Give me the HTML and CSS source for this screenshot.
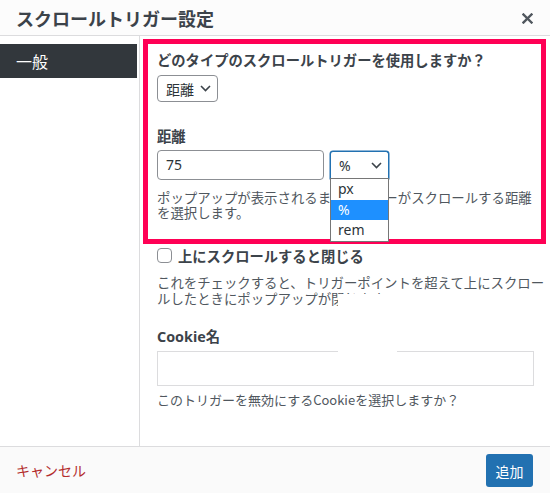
FILE: index.html
```html
<!DOCTYPE html>
<html lang="ja">
<head>
<meta charset="utf-8">
<link rel="stylesheet" href="styles.css">
</head>
<body>
<div class="modal">
  <header class="modal-header">
    <h1 class="title">スクロールトリガー設定</h1>
    <button class="close" aria-label="閉じる">
      <svg width="11" height="11" viewBox="0 0 11 11"><path d="M1.5 1.5 L9.5 9.5 M9.5 1.5 L1.5 9.5" stroke="#50575e" stroke-width="2.4" stroke-linecap="square"/></svg>
    </button>
  </header>
  <div class="modal-body">
    <nav class="sidebar">
      <div class="tab active">一般</div>
    </nav>
    <section class="content">
      <div class="field">
        <div class="label">どのタイプのスクロールトリガーを使用しますか？</div>
        <div class="select type-select">
          <span>距離</span>
          <svg class="chev" width="11" height="7" viewBox="0 0 11 7"><path d="M1 1 L5.5 5.5 L10 1" fill="none" stroke="#3c434a" stroke-width="1.6"/></svg>
        </div>
      </div>
      <div class="field distance">
        <div class="label">距離</div>
        <div class="distance-row">
          <div class="input num">75</div>
          <div class="unit-wrap">
            <div class="select unit-select">
              <span>%</span>
              <svg class="chev" width="11" height="7" viewBox="0 0 11 7"><path d="M1 1 L5.5 5.5 L10 1" fill="none" stroke="#3c434a" stroke-width="1.6"/></svg>
            </div>
            <ul class="dropdown">
              <li>px</li>
              <li class="selected">%</li>
              <li>rem</li>
            </ul>
          </div>
        </div>
        <p class="help help-distance">ポップアップが表示されるまでユーザーがスクロールする距離<br>を選択します。</p>
      </div>
      <div class="field check-field">
        <label class="check-row"><span class="checkbox"></span><span class="check-label">上にスクロールすると閉じる</span></label>
        <p class="help help-check">これをチェックすると、トリガーポイントを超えて上にスクロー<br>ルしたときにポップアップが閉じます</p>
      </div>
      <div class="field cookie">
        <div class="label">Cookie名</div>
        <div class="input wide"></div>
        <p class="help help-cookie">このトリガーを無効にするCookieを選択しますか？</p>
      </div>
    </section>
  </div>
  <footer class="modal-footer">
    <a class="cancel">キャンセル</a>
    <button class="add">追加</button>
  </footer>
  <div class="highlight"></div>
  <div class="mask"></div>
</div>
</body>
</html>
```
FILE: styles.css
```css
* { box-sizing: border-box; }
html, body { margin: 0; padding: 0; }
body {
  width: 550px;
  height: 493px;
  overflow: hidden;
  background: #fff;
  font-family: "Noto Sans", "Noto Sans CJK JP", sans-serif;
  color: #3c434a;
}
.modal {
  position: relative;
  width: 550px;
  height: 493px;
  display: flex;
  flex-direction: column;
}
.modal-header {
  height: 36px;
  flex: none;
  background: #fcfcfc;
  border-bottom: 1px solid #dcdcde;
  display: flex;
  align-items: center;
  justify-content: space-between;
  padding: 0 17px 0 16px;
}
.title {
  margin: 0;
  font-size: 18px;
  font-weight: 700;
  color: #3c434a;
  line-height: 24px;
  font-family: "Noto Sans CJK JP", sans-serif;
}
.close {
  border: 0;
  background: none;
  padding: 0;
  display: flex;
  margin-top: 1px;
}
.modal-body {
  flex: none;
  height: 410px;
  display: flex;
}
.sidebar {
  width: 140px;
  flex: none;
  border-right: 1px solid #dcdcde;
  padding: 8px 0 0;
}
.tab {
  height: 34px;
  background: #32373c;
  color: #fff;
  font-size: 16px;
  font-family: "Noto Sans CJK JP", sans-serif;
  line-height: 34px;
  padding-left: 16px;
  margin-right: 2px;
}
.content {
  flex: 1;
  padding: 14px 0 0 17px;
}
.label {
  font-size: 14.3px;
  line-height: 20px;
  font-weight: 700;
  color: #3c434a;
  font-family: "Noto Sans CJK JP", sans-serif;
}
.select {
  display: flex;
  align-items: center;
  justify-content: space-between;
  border: 1px solid #8c8f94;
  border-radius: 4px;
  background: #fff;
  font-size: 14px;
  color: #2c3338;
}
.type-select {
  margin-top: 5px;
  width: 61px;
  height: 27px;
  padding: 0 6px 0 8px;
  font-family: "Noto Sans CJK JP", sans-serif;
}
.distance { margin-top: 24px; }
.distance-row {
  margin-top: 4px;
  display: flex;
  align-items: flex-start;
  gap: 6px;
}
.input {
  border: 1px solid #8c8f94;
  border-radius: 4px;
  background: #fff;
  font-size: 14px;
}
.num {
  width: 167px;
  height: 30px;
  line-height: 28px;
  padding-left: 8px;
  color: #2c3338;
}
.unit-wrap {
  position: relative;
  margin-top: 1px;
}
.unit-select {
  width: 59px;
  height: 28px;
  border: 1px solid #2271b1;
  box-shadow: 0 0 0 0.5px #2271b1;
  border-bottom-color: #767676;
  border-radius: 3px 3px 0 0;
  padding: 0 6px 0 8px;
}
.dropdown {
  position: absolute;
  left: 0;
  top: 27px;
  width: 59px;
  margin: 0;
  padding: 0;
  list-style: none;
  background: #fff;
  border: 1px solid #767676;
  z-index: 2;
  font-size: 14px;
  color: #2c3338;
}
.dropdown li {
  height: 20.5px;
  line-height: 20px;
  padding-left: 7px;
}
.dropdown li.selected {
  background: #1e90ff;
  color: #fff;
}
.help {
  margin: 0;
  font-size: 13.4px;
  color: #50575e;
  font-family: "Noto Sans CJK JP", sans-serif;
  white-space: nowrap;
}
.help-distance {
  margin-top: 10px;
  line-height: 15px;
}
.check-field { margin-top: 25px; }
.check-row {
  display: flex;
  align-items: center;
  height: 20px;
}
.checkbox {
  width: 15px;
  height: 15px;
  border: 1px solid #8c8f94;
  border-radius: 4px;
  background: #fff;
  margin-right: 6px;
}
.check-label {
  font-size: 14.3px;
  font-weight: 700;
  color: #3c434a;
  font-family: "Noto Sans CJK JP", sans-serif;
}
.help-check {
  margin-top: 9px;
  line-height: 16px;
}
.cookie { margin-top: 21px; }
.cookie .label { font-family: "Noto Sans", "Noto Sans CJK JP", sans-serif; }
.wide {
  margin-top: 4px;
  width: 377px;
  height: 35px;
  border: 1px solid #dcdcde;
  border-radius: 0;
}
.help-cookie {
  margin-top: 6px;
  line-height: 16px;
  font-size: 13px;
}
.modal-footer {
  flex: 1;
  background: #fafafa;
  border-top: 1px solid #dcdcde;
  display: flex;
  align-items: center;
  justify-content: space-between;
  padding: 0 17px 0 16px;
}
.cancel {
  color: #b32d2e;
  font-size: 14px;
  font-family: "Noto Sans CJK JP", sans-serif;
}
.add {
  width: 47px;
  height: 33px;
  border: 0;
  border-radius: 3px;
  background: #2271b1;
  color: #fff;
  font-size: 14px;
  font-family: "Noto Sans CJK JP", sans-serif;
  padding: 0;
  margin-top: 1px;
}
.highlight {
  position: absolute;
  left: 143px;
  top: 39px;
  width: 403px;
  height: 205px;
  border: 5px solid #ff0055;
  pointer-events: none;
}
.mask {
  position: absolute;
  left: 338px;
  top: 294px;
  width: 59px;
  height: 58px;
  background: #fff;
}
```
